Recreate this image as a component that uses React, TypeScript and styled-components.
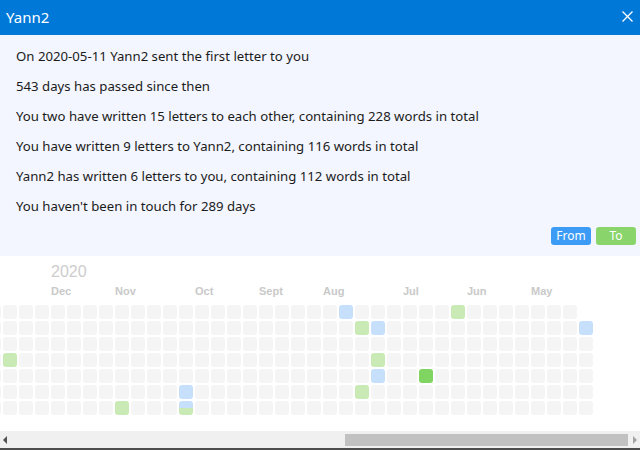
import React from "react";
import styled, { createGlobalStyle } from "styled-components";

const Global = createGlobalStyle`
  html, body { margin: 0; padding: 0; background: #fff; }
  body { font-family: "Noto Sans", "Liberation Sans", sans-serif; }
  * { box-sizing: border-box; }
`;

const Window = styled.div`
  width: 640px;
  height: 450px;
  display: flex;
  flex-direction: column;
  overflow: hidden;
  background: #fff;
`;

const TitleBar = styled.div`
  height: 35px;
  flex: none;
  background: #0078d7;
  display: flex;
  align-items: center;
  justify-content: space-between;
  padding: 0 6px 0 6px;
  color: #fff;
`;

const Title = styled.span`
  font-family: "Noto Sans", sans-serif;
  font-size: 15px;
  line-height: 20px;
  padding-bottom: 2px;
`;

const CloseBtn = styled.div`
  width: 14px;
  height: 14px;
  display: flex;
  align-items: center;
  justify-content: center;
  margin-bottom: 2px;
`;

const Summary = styled.div`
  flex: none;
  height: 221px;
  background: #f3f6fe;
  padding: 6px 4px 0 16px;
  display: flex;
  flex-direction: column;
`;

const Line = styled.div`
  font-family: "Noto Sans", sans-serif;
  font-size: 13.2px;
  line-height: 30px;
  color: #1b1b1b;
  white-space: nowrap;
`;

const Buttons = styled.div`
  display: flex;
  justify-content: flex-end;
  gap: 5px;
  margin-top: 6px;
`;

const Tag = styled.div<{ $bg: string }>`
  width: 40px;
  height: 18px;
  border-radius: 3px;
  background: ${(p) => p.$bg};
  color: #fff;
  font-family: "Noto Sans", sans-serif;
  font-size: 12px;
  line-height: 18px;
  text-align: center;
`;

const HeatArea = styled.div`
  flex: none;
  height: 175px;
  background: #fff;
  display: flex;
  justify-content: flex-end;
  overflow: hidden;
  padding-right: 47px;
`;

const Heat = styled.div`
  flex: none;
  display: flex;
  flex-direction: column;
`;

const LabelGrid = styled.div<{ $top: number; $h: number }>`
  display: grid;
  grid-template-columns: repeat(38, 14px);
  column-gap: 2px;
  height: ${(p) => p.$h}px;
  margin-top: ${(p) => p.$top}px;
`;

const Year = styled.span<{ $col: number }>`
  grid-column: ${(p) => p.$col} / span 4;
  font-family: "Liberation Sans", Arial, sans-serif;
  font-size: 16px;
  line-height: 20px;
  color: #cdcdcd;
  white-space: nowrap;
`;

const Month = styled.span<{ $col: number }>`
  grid-column: ${(p) => p.$col} / span 3;
  font-family: "Liberation Sans", Arial, sans-serif;
  font-size: 11px;
  font-weight: bold;
  line-height: 14px;
  color: #c9c9c9;
  white-space: nowrap;
`;

const CellGrid = styled.div`
  display: grid;
  grid-template-columns: repeat(38, 14px);
  grid-template-rows: repeat(7, 14px);
  grid-auto-flow: column;
  gap: 2px;
  margin-top: 7px;
`;

type Kind = "e" | "b" | "g" | "G" | "s" | "n";

const colors: Record<Kind, string> = {
  e: "#f5f5f5",
  b: "#c6e0fb",
  g: "#c9eab5",
  G: "#80d462",
  s: "linear-gradient(to bottom, #c6e0fb 0, #c6e0fb 50%, #c9eab5 50%, #c9eab5 100%)",
  n: "transparent",
};

const Cell = styled.div<{ $kind: Kind }>`
  width: 14px;
  height: 14px;
  border-radius: 3px;
  background: ${(p) => colors[p.$kind]};
`;

const ScrollBar = styled.div`
  flex: none;
  height: 17px;
  background: #f0f0f0;
  display: flex;
  align-items: center;
`;

const Arrow = styled.div<{ $dir: "l" | "r"; $c: string }>`
  width: 10px;
  height: 17px;
  display: flex;
  align-items: center;
  justify-content: center;
  &::before {
    content: "";
    width: 0;
    height: 0;
    border-top: 4px solid transparent;
    border-bottom: 4px solid transparent;
    ${(p) =>
      p.$dir === "l"
        ? `border-right: 4px solid ${p.$c};`
        : `border-left: 4px solid ${p.$c};`}
  }
`;

const Track = styled.div`
  flex: 1;
  height: 17px;
  display: flex;
  align-items: center;
`;

const Thumb = styled.div`
  margin-left: 335px;
  width: 283px;
  height: 12px;
  background: #c1c1c1;
`;

const BottomEdge = styled.div`
  flex: none;
  height: 2px;
  background: #4d4d4d;
`;

const lines = [
  "On 2020-05-11 Yann2 sent the first letter to you",
  "543 days has passed since then",
  "You two have written 15 letters to each other, containing 228 words in total",
  "You have written 9 letters to Yann2, containing 116 words in total",
  "Yann2 has written 6 letters to you, containing 112 words in total",
  "You haven't been in touch for 289 days",
];

// column index k from -1..36 -> grid column k+2
const months: [string, number][] = [
  ["Dec", 3],
  ["Nov", 7],
  ["Oct", 12],
  ["Sept", 16],
  ["Aug", 20],
  ["Jul", 25],
  ["Jun", 29],
  ["May", 33],
];

const special: Record<string, Kind> = {
  "21,0": "b",
  "28,0": "g",
  "22,1": "g",
  "23,1": "b",
  "36,1": "b",
  "0,3": "g",
  "23,3": "g",
  "23,4": "b",
  "26,4": "G",
  "11,5": "b",
  "22,5": "g",
  "7,6": "g",
  "11,6": "s",
  "36,0": "n",
};

export default function App() {
  const cells: { key: string; kind: Kind }[] = [];
  for (let k = -1; k <= 36; k++) {
    for (let r = 0; r < 7; r++) {
      const key = `${k},${r}`;
      cells.push({ key, kind: special[key] ?? "e" });
    }
  }
  return (
    <>
      <Global />
      <Window>
        <TitleBar>
          <Title>Yann2</Title>
          <CloseBtn>
            <svg width="11" height="11" viewBox="0 0 11 11">
              <path d="M0.5 0.5 L10.5 10.5 M10.5 0.5 L0.5 10.5" stroke="#fff" strokeWidth="1.3" fill="none" />
            </svg>
          </CloseBtn>
        </TitleBar>
        <Summary>
          {lines.map((l) => (
            <Line key={l}>{l}</Line>
          ))}
          <Buttons>
            <Tag $bg="#3c9bf5">From</Tag>
            <Tag $bg="#89d46b">To</Tag>
          </Buttons>
        </Summary>
        <HeatArea>
          <Heat>
            <LabelGrid $top={6} $h={20}>
              <Year $col={5}>2020</Year>
            </LabelGrid>
            <LabelGrid $top={2} $h={14}>
              {months.map(([m, k]) => (
                <Month key={m} $col={k + 2}>
                  {m}
                </Month>
              ))}
            </LabelGrid>
            <CellGrid>
              {cells.map((c) => (
                <Cell key={c.key} $kind={c.kind} />
              ))}
            </CellGrid>
          </Heat>
        </HeatArea>
        <ScrollBar>
          <Arrow $dir="l" $c="#505050" />
          <Track>
            <Thumb />
          </Track>
          <Arrow $dir="r" $c="#a3a3a3" />
        </ScrollBar>
        <BottomEdge />
      </Window>
    </>
  );
}
